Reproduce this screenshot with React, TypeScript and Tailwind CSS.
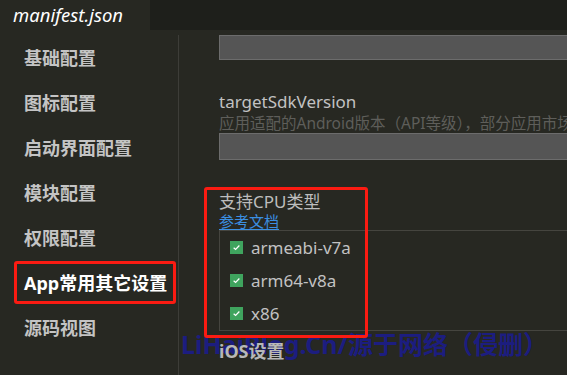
const menu = ['基础配置', '图标配置', '启动界面配置', '模块配置', '权限配置', 'App常用其它设置', '源码视图']
const cpus = ['armeabi-v7a', 'arm64-v8a', 'x86']

function CheckBox() {
  return (
    <span className="flex h-[13px] w-[13px] items-center justify-center bg-[#3fa45e]">
      <svg viewBox="0 0 12 12" className="h-[9px] w-[9px]" fill="none" stroke="#ffffff" strokeWidth="1.6">
        <path d="M2.2 6.3 L4.8 8.7 L9.8 3.3" />
      </svg>
    </span>
  )
}

export default function App() {
  return (
    <div
      className="relative flex h-[375px] w-[567px] flex-col overflow-hidden bg-[#272822]"
      style={{ fontFamily: '"Noto Sans", "Noto Sans CJK SC", sans-serif' }}
    >
      {/* watermark sits under the page text */}
      <div className="pointer-events-none absolute left-[181px] top-[329px] z-0 whitespace-nowrap text-[25px] font-bold leading-[30px] text-[#1c1d80]">
        LiHaiBlog.Cn/源于网络（侵删）
      </div>

      <div className="relative z-[1] flex h-[30px] shrink-0 bg-[#1e1f1b]">
        <div className="flex w-[150px] items-center bg-[#272822] pl-[13px]">
          <span className="text-[18.5px] italic leading-none text-white">manifest.json</span>
        </div>
      </div>

      <div className="relative z-[1] flex flex-1 pt-[5px]">
        <div className="w-[179px] shrink-0 border-r border-[#3d3d38]">
          {menu.map((item, i) => {
            const active = i === 5
            return (
              <div key={item} className="flex h-[45px] py-[1px] pl-[14px] pr-[2px]">
                <div
                  className={
                    active
                      ? 'flex flex-1 items-center rounded-[3px] border-[3px] border-[#fb1b12] pl-[7px] text-[18px] font-bold leading-none text-white'
                      : 'flex flex-1 items-center border-[3px] border-transparent pl-[7px] text-[18px] font-bold leading-none text-[#c4c4c4]'
                  }
                >
                  {item}
                </div>
              </div>
            )
          })}
        </div>

        <div className="relative flex-1 overflow-hidden pl-[40px]">
          <div className="w-[420px]">
            <div className="h-[25px] border border-[#6c6c6c] bg-[#555555]" />
            <div className="mt-[32px] text-[17px] leading-[20px] text-[#c2c2c2]">targetSdkVersion</div>
            <div className="whitespace-nowrap pt-[2px] text-[15.5px] leading-[18px] text-[#5e5e5a]">
              应用适配的Android版本（API等级），部分应用市场
            </div>
            <div className="mt-[1px] h-[27px] border border-[#6c6c6c] bg-[#555555]" />
            <div className="mt-[32px] text-[17px] leading-[20px] text-[#bdbdbd]">支持CPU类型</div>
            <div className="text-[15px] leading-[18px] text-[#3b8fe2] underline underline-offset-2">参考文档</div>
            <div className="border-y border-l border-[#45453f]">
              {cpus.map(cpu => (
                <div key={cpu} className="flex h-[33px] items-center gap-[8px] pl-[10px]">
                  <CheckBox />
                  <span className="text-[17px] leading-none text-[#c2c2c2]">{cpu}</span>
                </div>
              ))}
            </div>
            <div className="mt-[10px] text-[18px] font-bold leading-[20px] text-[#b8b8b8]">iOS设置</div>
          </div>
        </div>
      </div>

      <div className="pointer-events-none absolute left-[204px] top-[187px] z-[2] h-[151px] w-[164px] rounded-[3px] border-[3px] border-[#fb1b12]" />
    </div>
  )
}
